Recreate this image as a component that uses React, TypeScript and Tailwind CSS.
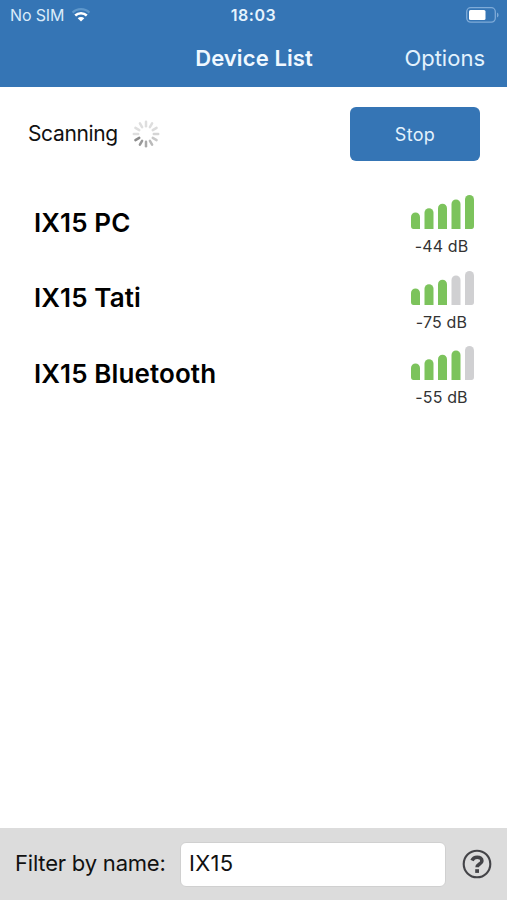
type Device = {
  name: string;
  rssi: number;
  level: number;
};

const devices: Device[] = [
  { name: "IX15 PC", rssi: -44, level: 5 },
  { name: "IX15 Tati", rssi: -75, level: 3 },
  { name: "IX15 Bluetooth", rssi: -55, level: 4 },
];

const bars = [
  "M0 34V22a4.5 4.5 0 0 1 9 0v12H2.5Q0 34 0 31Z",
  "M13.5 34V17.7a4.5 4.5 0 0 1 9 0V34Z",
  "M27 34V13.3a4.5 4.5 0 0 1 9 0V34Z",
  "M40.5 34V8.9a4.5 4.5 0 0 1 9 0V34Z",
  "M54 34V4.5a4.5 4.5 0 0 1 9 0V31Q63 34 60.5 34Z",
];

// Spoke greys, clockwise from the top
const spokes = [
  "#dedede",
  "#dedede",
  "#dcdcdc",
  "#d5d5d5",
  "#c9c9c9",
  "#bababa",
  "#a9a9a9",
  "#999999",
  "#8a8a8a",
  "#dedede",
  "#dedede",
  "#dedede",
];

const WifiIcon = () => (
  <svg width="20" height="14" viewBox="0 0 20 14" fill="none">
    <path d="M1.6 4.6a12 12 0 0 1 16.8 0" stroke="#5e97cb" strokeWidth="2.2" />
    <path d="M4.2 7.5a8.4 8.4 0 0 1 11.6 0" stroke="white" strokeWidth="2.5" />
    <path d="M10 13.6 6.7 10.3a4.6 4.6 0 0 1 6.6 0Z" fill="white" />
  </svg>
);

const BatteryIcon = () => (
  <svg width="33" height="16" viewBox="0 0 33 16" fill="none">
    <rect x="0.7" y="0.7" width="28.6" height="14.4" rx="4" stroke="#7fabd8" strokeWidth="1.3" />
    <rect x="3" y="3" width="16.5" height="10" rx="1.5" fill="white" />
    <path d="M31 5.5q1.6.8 1.6 2.5T31 10.5Z" fill="#7fabd8" />
  </svg>
);

const Spinner = () => (
  <svg width="28" height="28" viewBox="-14 -14 28 28">
    {spokes.map((color, i) => (
      <line
        key={i}
        x1="0"
        y1="-7.8"
        x2="0"
        y2="-12.2"
        stroke={color}
        strokeWidth="2.5"
        strokeLinecap="round"
        transform={`rotate(${i * 30})`}
      />
    ))}
  </svg>
);

const Signal = ({ level }: { level: number }) => (
  <svg width="63" height="34" viewBox="0 0 63 34">
    {bars.map((d, i) => (
      <path key={d} d={d} fill={i < level ? "#7cc35c" : "#d0d0d2"} />
    ))}
  </svg>
);

const HelpIcon = () => (
  <svg width="30" height="30" viewBox="0 0 30 30" fill="none" stroke="#444448">
    <circle cx="15" cy="15" r="13.3" strokeWidth="2.1" />
    <path
      d="M10 11.4C11 9.2 12.8 8.2 15.2 8.2C18 8.2 19.9 9.7 19.9 11.9C19.9 15.1 15.1 15 15.1 18.3"
      strokeWidth="3.6"
    />
    <rect x="13.2" y="20.2" width="3.8" height="3.7" fill="#444448" stroke="none" />
  </svg>
);

const Header = () => (
  <header className="h-[87px] bg-[#3575b5] text-white">
    <div className="grid h-[29px] grid-cols-3 items-center pr-2 pl-2.5">
      <div className="flex items-center gap-[7px] text-[16px] tracking-[-0.15px] text-[#d9ebfa]">
        <span>No SIM</span>
        <WifiIcon />
      </div>
      <span className="pr-0.5 text-center text-[16px] font-semibold tracking-[0.5px] text-[#e6f3fd]">
        18:03
      </span>
      <div className="flex justify-end">
        <BatteryIcon />
      </div>
    </div>
    <div className="grid h-[58px] grid-cols-[1fr_auto_1fr] items-center pr-[22px] pl-[23px]">
      <span />
      <h1 className="text-[22px] font-semibold tracking-[0.1px] text-[#f0f8ff]">Device List</h1>
      <button className="justify-self-end text-[22px] text-[#e3f2fd]">Options</button>
    </div>
  </header>
);

export default function App() {
  return (
    <div className="flex h-[900px] w-[507px] flex-col bg-white font-['Inter',sans-serif] text-[#111111]">
      <Header />
      <main className="flex-1">
        <div className="flex items-center justify-between pt-5 pr-[27px] pl-7">
          <div className="flex items-center gap-3.5">
            <span className="text-[21px] tracking-[-0.35px]">Scanning</span>
            <Spinner />
          </div>
          <button className="h-[54px] w-[130px] rounded-md bg-[#3575b5] text-[18px] tracking-[0.3px] text-[#e3f2fd]">
            Stop
          </button>
        </div>
        <ul className="pt-[23px]">
          {devices.map((device) => (
            <li
              key={device.name}
              className="flex h-[75.6px] items-center justify-between pr-[33px] pl-[34px]"
            >
              <span className="pt-px text-[26px] font-semibold tracking-[0.1px] text-black">
                {device.name}
              </span>
              <div className="flex w-[63px] flex-col items-center pt-[10px]">
                <Signal level={device.level} />
                <span className="mt-[5px] pr-0.5 text-[16px] leading-6 tracking-[0.15px] whitespace-nowrap text-[#333333]">
                  {device.rssi} dB
                </span>
              </div>
            </li>
          ))}
        </ul>
      </main>
      <footer className="flex h-[72px] items-center bg-[#dcdcdc] px-[15px]">
        <label
          htmlFor="filter"
          className="w-[165px] pb-0.5 text-[22px] tracking-[-0.2px] whitespace-nowrap"
        >
          Filter by name:
        </label>
        <input
          id="filter"
          type="text"
          defaultValue="IX15"
          className="h-[45px] w-[266px] rounded-md border border-[#d0d0d0] bg-white px-2 pb-0.5 text-[22px] tracking-[0.3px] outline-none"
        />
        <button className="ml-auto" aria-label="Help">
          <HelpIcon />
        </button>
      </footer>
    </div>
  );
}
